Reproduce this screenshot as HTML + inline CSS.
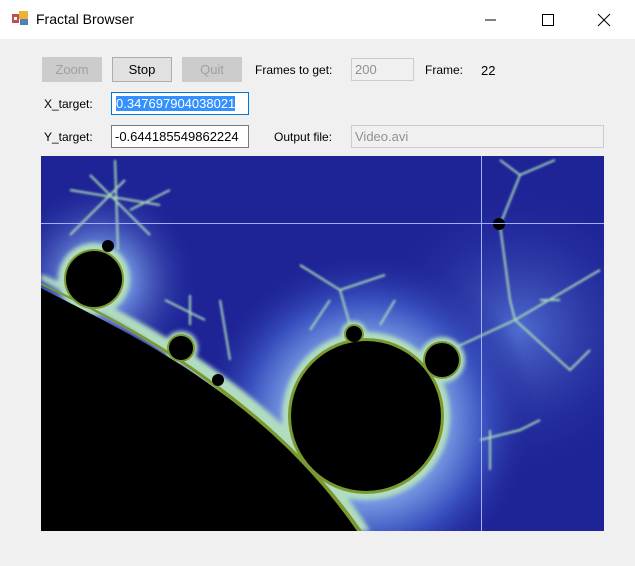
<!DOCTYPE html>
<html><head><style>
body{margin:0;width:635px;height:566px;background:#f0f0f0;font-family:"Liberation Sans",sans-serif;font-size:12px;position:relative;overflow:hidden;color:#000}
.tb{position:absolute;left:0;top:0;width:635px;height:39px;background:#fff}
.t{position:absolute;left:36px;top:11px;font-size:14px}
.a{position:absolute}
.btn{position:absolute;height:24px;top:57px;width:58px;text-align:center;line-height:24px;font-size:13px;box-sizing:border-box}
.dis{background:#cccccc;color:#a0a0a0;border:1px solid #cccccc}
.inp{position:absolute;height:23px;box-sizing:border-box;font-size:13px;line-height:21px;padding-left:3px}
</style></head><body>
<div class="tb">
<svg class="a" style="left:12px;top:10px" width="17" height="17"><rect x="0" y="4" width="7" height="9" fill="#c0504d"/><rect x="7" y="1" width="9" height="8" fill="#f0b030"/><rect x="8" y="9" width="8" height="6" fill="#4f81bd"/><rect x="2" y="7" width="3" height="3" fill="#fff"/></svg>
<div class="t">Fractal Browser</div>
<svg class="a" style="left:480px;top:12px" width="140" height="16"><line x1="5" y1="8" x2="16" y2="8" stroke="#000"/><rect x="62.5" y="2.5" width="11" height="11" fill="none" stroke="#000"/><line x1="118" y1="2" x2="130" y2="14" stroke="#000"/><line x1="130" y1="2" x2="118" y2="14" stroke="#000"/></svg>
</div>
<div class="btn dis" style="left:42px;top:57px;width:60px;height:25px">Zoom</div>
<div class="btn" style="left:112px;width:60px;height:25px;background:#e1e1e1;border:1px solid #adadad">Stop</div>
<div class="btn dis" style="left:182px;width:60px;height:25px">Quit</div>
<div class="a" style="left:255px;top:63px">Frames to get:</div>
<div class="inp" style="left:351px;top:58px;width:63px;border:1px solid #ccc;color:#909090">200</div>
<div class="a" style="left:425px;top:63px">Frame:</div>
<div class="a" style="left:481px;top:63px;font-size:13px">22</div>
<div class="a" style="left:44px;top:97px">X_target:</div>
<div class="inp" style="left:111px;top:92px;width:138px;background:#fff;border:1px solid #0078d7;padding-left:4px"><span style="background:#3390ff;color:#fff">0.347697904038021</span></div>
<div class="a" style="left:44px;top:130px">Y_target:</div>
<div class="inp" style="left:111px;top:125px;width:138px;background:#fff;border:1px solid #7a7a7a">-0.644185549862224</div>
<div class="a" style="left:274px;top:130px">Output file:</div>
<div class="inp" style="left:351px;top:125px;width:253px;border:1px solid #ccc;color:#909090">Video.avi</div>
<svg class="a" style="left:41px;top:156px" width="563" height="375" viewBox="41 156 563 375">
<defs>
<radialGradient id="g1" cx="366" cy="420" r="170" gradientUnits="userSpaceOnUse"><stop offset="0.45" stop-color="#7fa2e6"/><stop offset="0.7" stop-color="#3a52c0"/><stop offset="1" stop-color="#1f2596" stop-opacity="0"/></radialGradient>
<radialGradient id="g2" cx="520" cy="330" r="150" gradientUnits="userSpaceOnUse"><stop offset="0" stop-color="#4f6cd0"/><stop offset="1" stop-color="#1f2596" stop-opacity="0"/></radialGradient>
<radialGradient id="g3" cx="100" cy="280" r="100" gradientUnits="userSpaceOnUse"><stop offset="0.3" stop-color="#6f90e0"/><stop offset="1" stop-color="#1f2596" stop-opacity="0"/></radialGradient>
<filter id="b"><feGaussianBlur stdDeviation="2"/></filter>
<filter id="b1"><feGaussianBlur stdDeviation="1"/></filter>
</defs>
<rect x="41" y="156" width="563" height="375" fill="#1e2396"/>
<rect x="41" y="156" width="563" height="375" fill="url(#g2)"/>
<rect x="41" y="156" width="563" height="375" fill="url(#g1)"/>
<rect x="41" y="156" width="563" height="375" fill="url(#g3)"/>
<g stroke="#a8d8b8" stroke-width="2" fill="none" filter="url(#b1)">
<path d="M118,250 L115,160 M70,190 L160,205 M90,175 L150,235 M125,180 L70,235 M130,210 L170,190"/>
<path d="M190,325 L190,295 M165,300 L205,320 M230,360 L220,300"/>
<path d="M350,325 L340,290 L300,265 M340,290 L385,275 M330,300 L310,330 M380,325 L395,300"/>
<path d="M500,225 L520,175 L555,160 M520,175 L500,160 M500,225 L510,300 L515,320 L450,350 M515,320 L600,270 M515,320 L570,370 L590,350 M540,300 L560,300 M480,440 L520,430 L540,420 M490,430 L490,470"/>
</g>
<g fill="#b0dcc0" filter="url(#b)">
<circle cx="366" cy="416" r="84"/><circle cx="94" cy="279" r="36"/><circle cx="442" cy="360" r="23"/><circle cx="181" cy="348" r="17"/><circle cx="354" cy="334" r="13"/>
<path d="M41,280 C120,322 250,392 340,531 L370,531 C290,400 150,320 41,274Z"/>
</g>
<g fill="#7a9a30">
<circle cx="366" cy="416" r="78"/><circle cx="94" cy="279" r="30"/><circle cx="442" cy="360" r="19"/><circle cx="181" cy="348" r="14"/><circle cx="354" cy="334" r="10"/>
<path d="M41,285 C125,325 258,392 350,531 L362,531 C275,405 140,328 41,283Z"/>
</g>
<g fill="#000">
<path d="M41,288 C120,330 260,390 357,531 L41,531Z"/>
<circle cx="366" cy="416" r="75"/><circle cx="94" cy="279" r="28"/><circle cx="442" cy="360" r="17"/><circle cx="181" cy="348" r="12"/><circle cx="354" cy="334" r="8"/><circle cx="499" cy="224" r="6"/><circle cx="108" cy="246" r="6"/><circle cx="218" cy="380" r="6"/>
</g>
<line x1="41" y1="223.5" x2="604" y2="223.5" stroke="#9fb0ff" stroke-width="1"/>
<line x1="481.5" y1="156" x2="481.5" y2="531" stroke="#9fb0ff" stroke-width="1"/>
</svg>
</body></html>
